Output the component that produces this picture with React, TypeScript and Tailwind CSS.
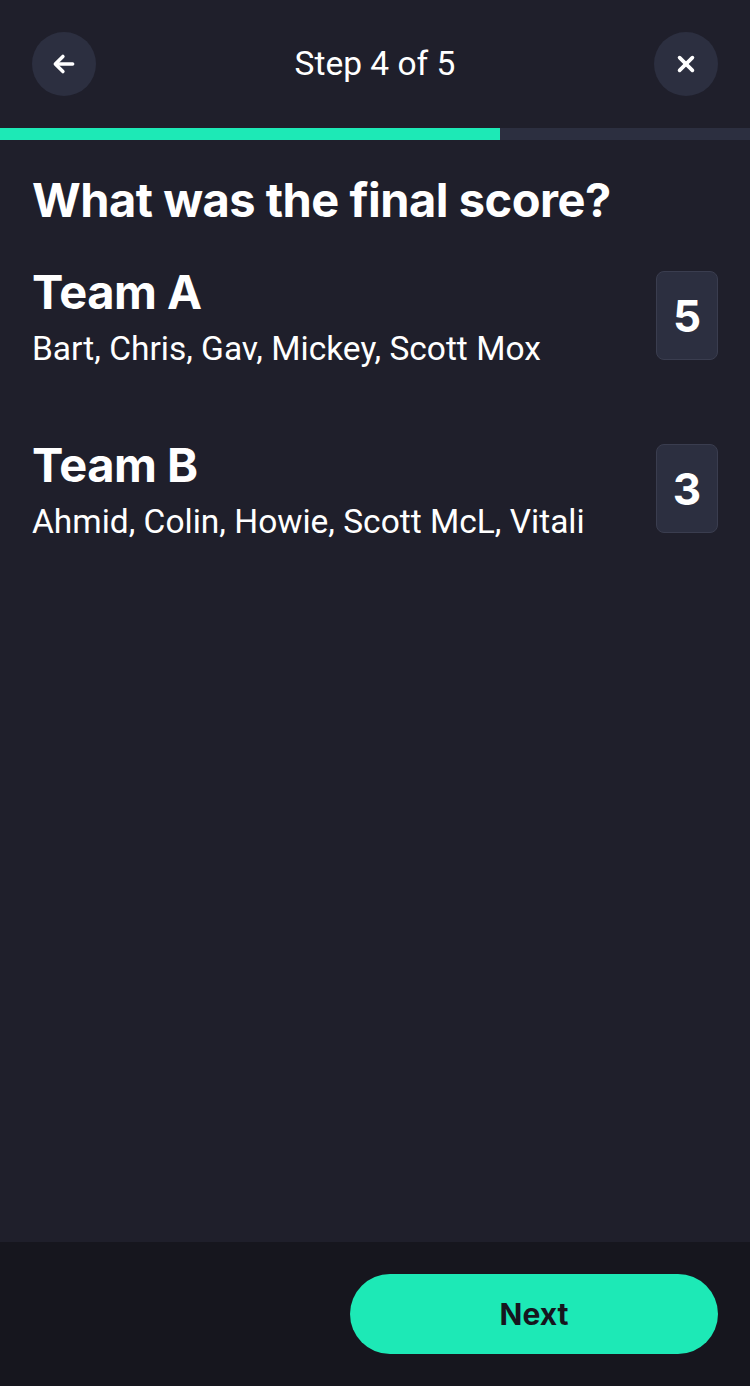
import React from "react";

type Team = {
  name: string;
  players: string[];
  score: number;
};

const teams: Team[] = [
  { name: "Team A", players: ["Bart", "Chris", "Gav", "Mickey", "Scott Mox"], score: 5 },
  { name: "Team B", players: ["Ahmid", "Colin", "Howie", "Scott McL", "Vitali"], score: 3 },
];

const step = 4;
const totalSteps = 5;

const ArrowLeft = () => (
  <svg width="26" height="26" viewBox="0 0 24 24" fill="none" stroke="currentColor" strokeWidth="3.2" strokeLinecap="round" strokeLinejoin="round">
    <path d="M20 12H5" />
    <path d="M11 5l-7 7 7 7" />
  </svg>
);

const CloseIcon = () => (
  <svg width="22" height="22" viewBox="0 0 24 24" fill="none" stroke="currentColor" strokeWidth="4" strokeLinecap="round">
    <path d="M5 5l14 14" />
    <path d="M19 5L5 19" />
  </svg>
);

const ScoreRow = ({ team }: { team: Team }) => (
  <div className="flex items-start justify-between">
    <div className="flex flex-col">
      <h2 className="text-[47px] leading-[52px] font-bold tracking-[-0.5px] text-white font-['Inter',sans-serif]">
        {team.name}
      </h2>
      <p className="mt-[11px] text-[33.5px] leading-[40px] text-white font-['Roboto',sans-serif]">
        {team.players.join(", ")}
      </p>
    </div>
    <div className="mt-[5px] flex h-[89px] w-[62px] items-center justify-center rounded-lg border border-[#3a3d4f] bg-[#2c2f40]">
      <span className="text-[44px] font-bold text-white font-['Inter',sans-serif]">{team.score}</span>
    </div>
  </div>
);

const App = () => {
  const progress = 500;

  return (
    <div className="flex h-[1386px] w-[750px] flex-col bg-[#1f1f2b] text-white">
      <header className="flex h-[128px] items-center justify-between px-8">
        <button className="flex h-16 w-16 items-center justify-center rounded-full bg-[#2c2f40] text-white">
          <ArrowLeft />
        </button>
        <span className="text-[33.5px] text-white font-['Roboto',sans-serif]">
          Step {step} of {totalSteps}
        </span>
        <button className="flex h-16 w-16 items-center justify-center rounded-full bg-[#2c2f40] text-white">
          <CloseIcon />
        </button>
      </header>

      <div className="h-3 w-full bg-[#2c2f40]">
        <div className="h-full bg-[#1de9b6]" style={{ width: progress }} />
      </div>

      <main className="flex flex-1 flex-col px-8 pt-[32px]">
        <h1 className="text-[47px] leading-[56px] font-bold tracking-[-0.5px] text-white font-['Inter',sans-serif]">
          What was the final score?
        </h1>
        <div className="mt-[38px] flex flex-col gap-[70px]">
          {teams.map((team) => (
            <ScoreRow key={team.name} team={team} />
          ))}
        </div>
      </main>

      <footer className="flex h-[144px] items-start justify-end bg-[#16161e] px-8 pt-8">
        <button className="h-20 w-[368px] rounded-full bg-[#1de9b6] text-[30px] font-bold text-[#16161e] font-['Inter',sans-serif]">
          Next
        </button>
      </footer>
    </div>
  );
};

export default App;
